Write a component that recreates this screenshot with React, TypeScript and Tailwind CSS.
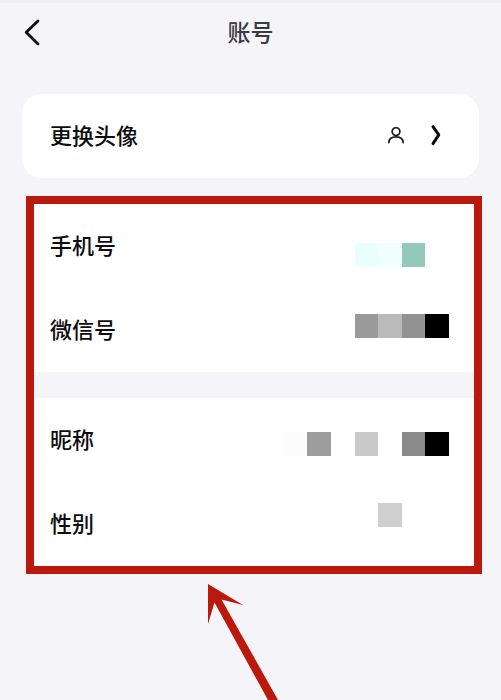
import React from "react";

interface SettingRowProps {
  label: string;
  children?: React.ReactNode;
}

interface MosaicCell {
  col: number;
  row: number;
  color: string;
}

const mosaicCells: MosaicCell[] = [
  { col: 4, row: 0, color: "#e8fffc" },
  { col: 5, row: 0, color: "#f1fffc" },
  { col: 6, row: 0, color: "#94c9b9" },
  { col: 4, row: 3, color: "#9a9a9a" },
  { col: 5, row: 3, color: "#bababa" },
  { col: 6, row: 3, color: "#929292" },
  { col: 7, row: 3, color: "#000000" },
  { col: 0, row: 8, color: "#fefefe" },
  { col: 1, row: 8, color: "#fcfcfc" },
  { col: 2, row: 8, color: "#9d9d9d" },
  { col: 4, row: 8, color: "#c9c9c9" },
  { col: 6, row: 8, color: "#8b8b8b" },
  { col: 7, row: 8, color: "#000000" },
  { col: 5, row: 11, color: "#cfcfcf" },
];

function SettingRow({ label, children }: SettingRowProps) {
  return (
    <button
      type="button"
      className="flex h-[84px] w-full items-center justify-between text-left text-[22px] leading-8 font-medium text-[#0c0c0e]"
    >
      <span className="pb-1">{label}</span>
      {children}
    </button>
  );
}

// Covers the private values on the right side of the rows
function Mosaic() {
  return (
    <svg
      width="189"
      height="284"
      viewBox="0 0 8 12"
      preserveAspectRatio="none"
      shapeRendering="crispEdges"
      aria-hidden="true"
      className="pointer-events-none absolute top-[39px] right-[25px]"
    >
      {mosaicCells.map((cell) => (
        <rect
          key={`${cell.col}-${cell.row}`}
          x={cell.col}
          y={cell.row}
          width="1"
          height="1"
          fill={cell.color}
        />
      ))}
    </svg>
  );
}

function UserIcon() {
  return (
    <svg
      width="18"
      height="18"
      viewBox="0 0 18 18"
      fill="none"
      stroke="#1c1c1e"
      strokeWidth="1.7"
      strokeLinecap="round"
      aria-hidden="true"
    >
      <circle cx="9" cy="4.6" r="3.9" />
      <path d="M1.9 15.6C1.9 11.8 4.6 9.8 9 9.8s7.1 2 7.1 5.8" />
    </svg>
  );
}

export default function App() {
  return (
    <div className="min-h-screen overflow-hidden border-t-3 border-[#eeeef3] bg-[#f4f4f9] font-['Noto_Sans_CJK_SC',sans-serif]">
      <header className="grid h-[59px] grid-cols-[1fr_auto_1fr] items-center px-5">
        <button type="button" aria-label="返回" className="justify-self-start">
          <svg
            width="24"
            height="28"
            viewBox="0 0 24 28"
            fill="none"
            stroke="#0a0a0a"
            strokeWidth="2.8"
            strokeLinecap="round"
            strokeLinejoin="round"
          >
            <path d="M18 2 6.2 13.2 18 25" />
          </svg>
        </button>
        <h1 className="pb-1 text-[23px] leading-8 font-medium text-[#3b3944]">
          账号
        </h1>
      </header>

      <main className="mt-8">
        <section className="mx-[22px] rounded-[20px] bg-white pr-9 pl-7">
          <SettingRow label="更换头像">
            <span className="flex items-center gap-6">
              <UserIcon />
              <svg
                width="14"
                height="24"
                viewBox="0 0 14 24"
                fill="none"
                stroke="#0a0a0a"
                strokeWidth="3"
                strokeLinecap="round"
                strokeLinejoin="round"
                aria-hidden="true"
              >
                <path d="M4 2.6 9.8 10.8 4 19.6" />
              </svg>
            </span>
          </SettingRow>
        </section>

        <div className="relative mt-[18px] mr-[19px] ml-[26px] flex flex-col gap-[26px] border-8 border-[#bb190b]">
          <section className="rounded-b-xs bg-white px-4">
            <SettingRow label="手机号" />
            <SettingRow label="微信号" />
          </section>
          <section className="rounded-t-xs bg-white px-4">
            <SettingRow label="昵称" />
            <SettingRow label="性别" />
          </section>
          <Mosaic />
        </div>

        <svg
          width="80"
          height="116"
          viewBox="0 0 80 116"
          fill="#bb190b"
          aria-hidden="true"
          className="mt-[10px] ml-[208px]"
        >
          <path d="M0 0 35 21 13.5 15.5 70 116H60L6.5 18.5 0 40Z" />
        </svg>
      </main>
    </div>
  );
}
